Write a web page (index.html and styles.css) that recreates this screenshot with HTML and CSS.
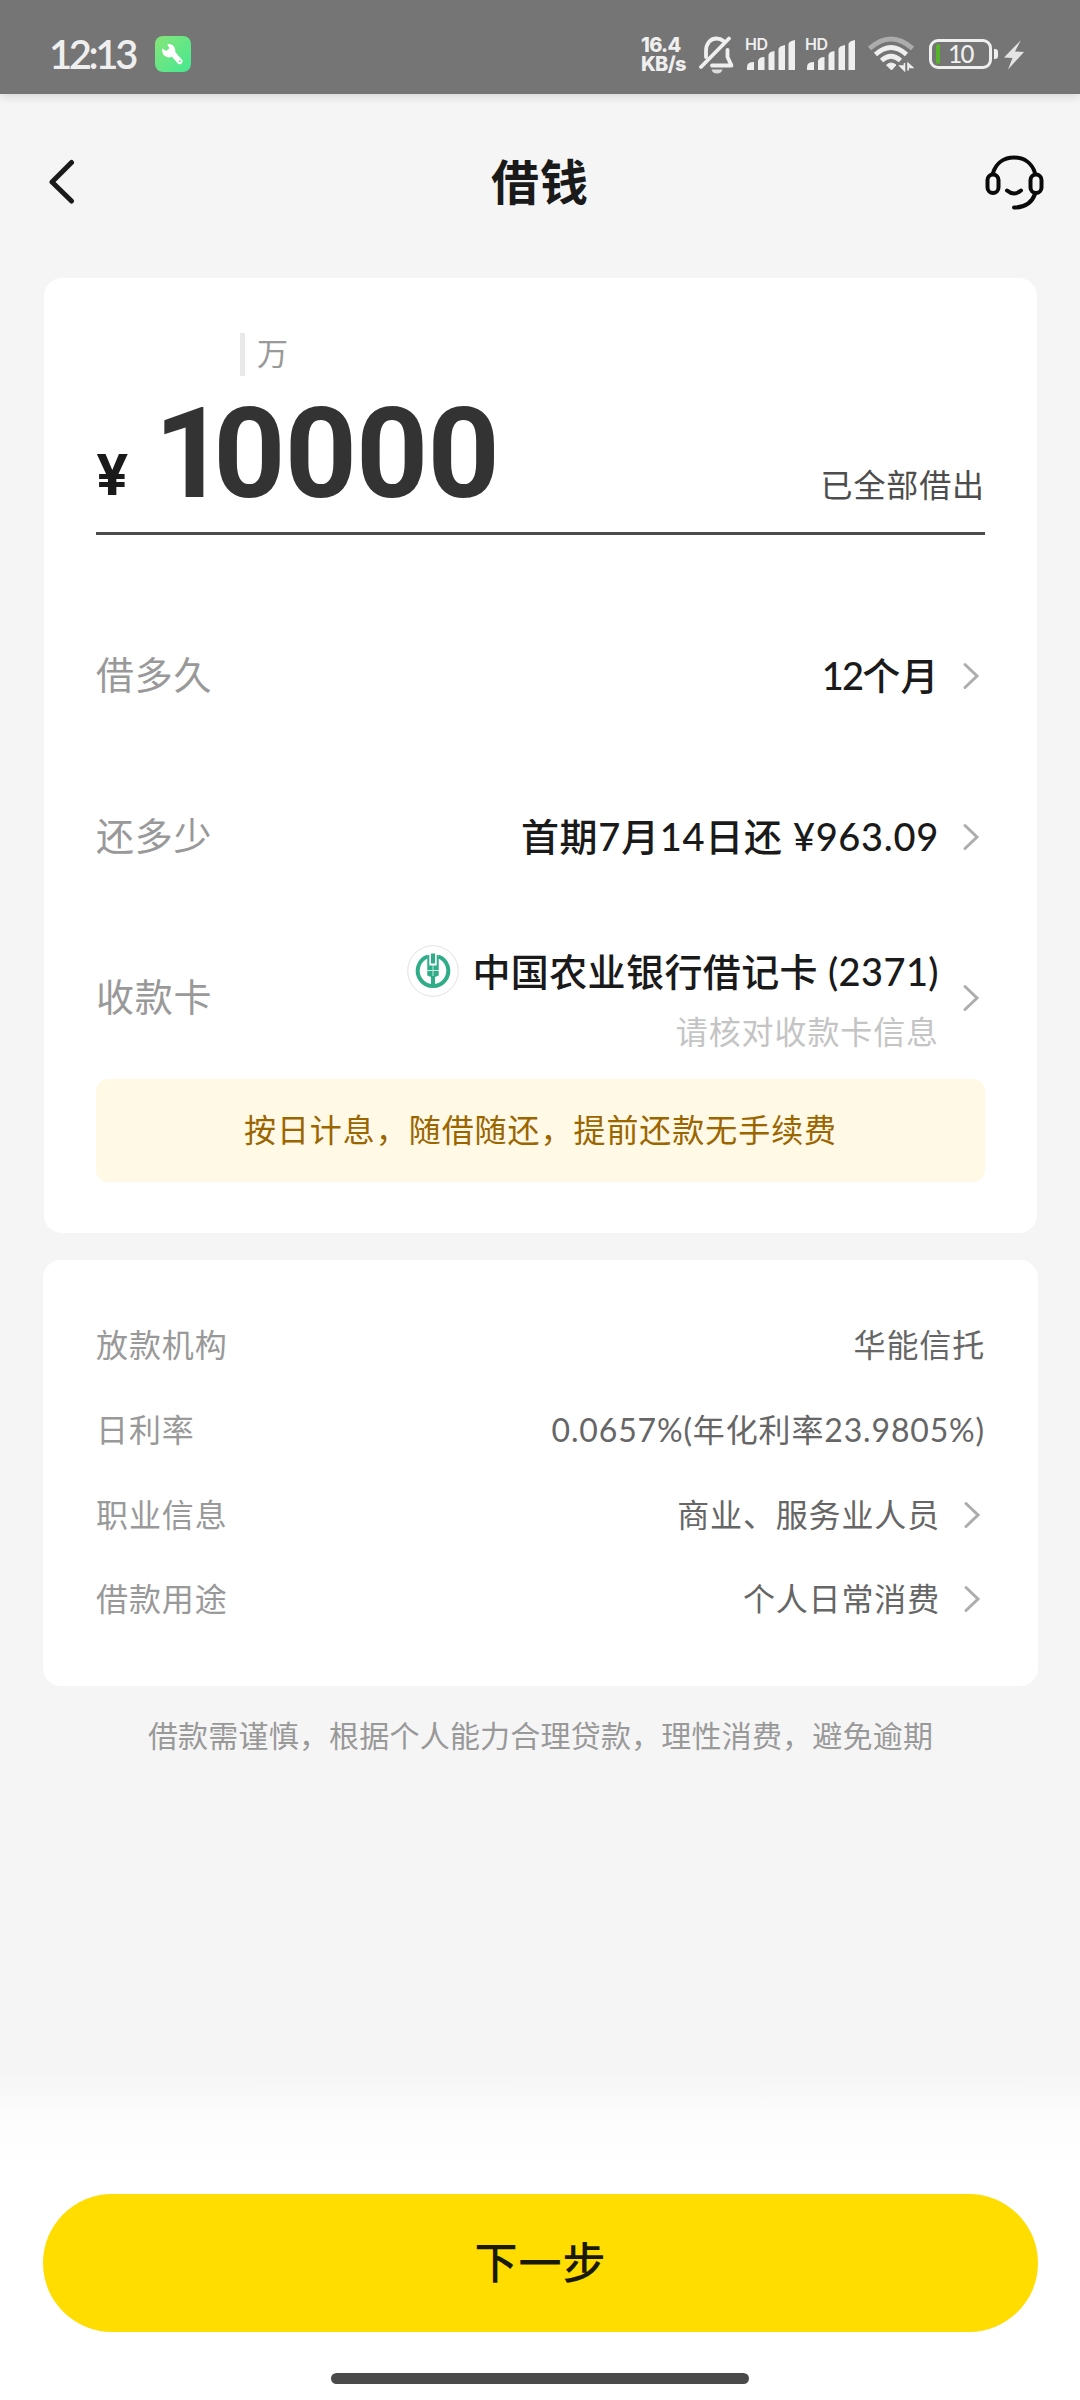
FILE: index.html
```html
<!DOCTYPE html>
<html lang="zh-CN">
<head>
<meta charset="utf-8">
<title>借钱</title>
<link rel="stylesheet" href="styles.css">
</head>
<body>
<div class="status">
  <span class="clock">12:13</span>
  <svg class="app-badge" width="36" height="36" viewBox="0 0 36 36">
    <defs><linearGradient id="g" x1="0" y1="0" x2="1" y2="1"><stop offset="0" stop-color="#86e57a"/><stop offset="1" stop-color="#45e890"/></linearGradient></defs>
    <rect width="36" height="36" rx="8" fill="url(#g)"/>
    <path d="M17 16.5L24.7 25.3" stroke="#fff" stroke-width="5.6" stroke-linecap="round"/>
    <path d="M12.2 8.2A6.7 6.7 0 1 1 7.4 12.6L11.2 15L14.4 12.3Z" fill="#fff"/>
    <circle cx="24.8" cy="25.3" r="1" fill="#66e686"/>
  </svg>
  <div class="status-right">
    <div class="speed"><span>16.4</span><span>KB/s</span></div>
    <svg class="bell" width="36" height="38" viewBox="0 0 36 38">
      <g fill="none" stroke="#efefef" stroke-width="3.8" stroke-linejoin="round" stroke-linecap="round">
        <path d="M7 21V15C7 8 11 2.500 17.500 2.500C20.500 2.500 22.500 3.300 24.500 5"/>
        <path d="M28.500 14V21L32.500 29.500H13"/>
        <path d="M2 31L30 2.500"/>
      </g>
      <path d="M12.500 33.500H23.500C22.500 36.500 20.500 37.500 18 37.500S13.500 36.500 12.500 33.500Z" fill="#ddd"/>
    </svg>
    <div class="signal"><span class="hd">HD</span>
      <svg width="50" height="30" viewBox="0 0 50 30" fill="#efefef"><path d="M0 30V27Q0 22 7 22V30ZM11 30V21Q12 17 17.500 17V30ZM21.500 30V15Q22 11.500 27.500 11V30ZM31.500 30V9Q32 6 38 5V30ZM41.500 30V4Q42 1 48 0V30Z"/></svg>
    </div>
    <div class="signal"><span class="hd">HD</span>
      <svg width="50" height="30" viewBox="0 0 50 30" fill="#efefef"><path d="M0 30V27Q0 22 7 22V30ZM11 30V21Q12 17 17.500 17V30ZM21.500 30V15Q22 11.500 27.500 11V30ZM31.500 30V9Q32 6 38 5V30ZM41.500 30V4Q42 1 48 0V30Z"/></svg>
    </div>
    <svg class="wifi" width="46" height="36" viewBox="0 0 46 36">
      <g fill="none" stroke-width="4.800">
        <path d="M1.500 12.500Q23 -6.500 44.500 12.500" stroke="#acacac"/>
        <path d="M7.500 18.500Q23 4.500 38.500 18.500" stroke="#efefef"/>
        <path d="M13.500 24.500Q23 16 32.500 24.500" stroke="#efefef"/>
      </g>
      <path d="M18.500 29Q23 25 28 29L23.500 34Z" fill="#efefef" stroke="#efefef" stroke-linejoin="round"/>
      <path d="M36.500 27V34.500L32 30H35M40 34.500V27.500L44.500 31.500H41.500" fill="#efefef" stroke="#efefef" stroke-width="1.500"/>
    </svg>
    <div class="battery"><span class="level"></span><span class="pct">10</span></div>
    <span class="tip"></span>
    <svg class="bolt" width="20" height="30" viewBox="0 0 20 30"><path d="M17 0L0 17.500L8.500 18L4 29.500L20 12L11 11.500Z" fill="#e4e4e4"/></svg>
  </div>
</div>

<header class="nav">
  <svg width="26" height="46" viewBox="0 0 26 46"><path d="M22.500 3.500L3 23L22.500 42" fill="none" stroke="#1a1a1a" stroke-width="5" stroke-linecap="round" stroke-linejoin="round"/></svg>
  <h1>借钱</h1>
  <svg width="60" height="56" viewBox="0 0 60 56"><g fill="none" stroke="#0a0a0a" stroke-width="4" stroke-linecap="round">
    <path d="M9 19C12 9 20 3.500 30 3.500S48 9 51 19"/>
    <rect x="3.500" y="20.500" width="11" height="18.500" rx="5.500"/><rect x="46.500" y="20.500" width="11" height="18.500" rx="5.500"/>
    <path d="M51 40C48 48.500 41 53.500 30 53.500M23 36.500Q30 42.500 37 36.500"/></g></svg>
</header>

<main>
  <section class="card loan">
    <div class="amount">
      <div class="unit"><i></i><span>万</span></div>
      <div class="sum"><span class="yen">¥</span><span class="num"><span class="lead">1</span>0000</span><span class="note">已全部借出</span></div>
    </div>
    <div class="row"><span class="label">借多久</span><span class="value"><span class="months">12</span>个月</span><svg class="chev" width="18" height="28" viewBox="0 0 18 28"><path d="M3 2.500L15 14L3 25.500"/></svg></div>
    <div class="row"><span class="label">还多少</span><span class="value wide">首期7月14日还 ¥963.09</span><svg class="chev" width="18" height="28" viewBox="0 0 18 28"><path d="M3 2.500L15 14L3 25.500"/></svg></div>
    <div class="row"><span class="label">收款卡</span>
      <div class="bank">
        <div class="bank-name">
          <svg width="52" height="52" viewBox="0 0 52 52"><circle cx="26" cy="26" r="25.300" fill="#fff" stroke="#e2e2e2"/>
            <path d="M20.500 11.500A15.300 15.300 0 1 0 31.500 11.500" fill="none" stroke="#2fac88" stroke-width="4"/>
            <path d="M24 8.500H28V18.500H24ZM20.300 10H22.300V20.500H29.700V10H31.700V30.500L28 32V41H24V32L20.300 30.500Z" fill="#2fac88"/>
            <path d="M20 25.500H32M26 20V31" stroke="#c9ebe0" stroke-width="1"/></svg>
          <span class="value">中国农业银行借记卡 (2371)</span>
        </div>
        <span class="hint">请核对收款卡信息</span>
      </div>
      <svg class="chev" width="18" height="28" viewBox="0 0 18 28"><path d="M3 2.500L15 14L3 25.500"/></svg></div>
    <p class="promo">按日计息，随借随还，提前还款无手续费</p>
  </section>

  <section class="card details">
    <div class="line"><span class="key">放款机构</span><span class="val">华能信托</span></div>
    <div class="line"><span class="key">日利率</span><span class="val">0.0657%(年化利率23.9805%)</span></div>
    <div class="line"><span class="key">职业信息</span><span class="val">商业、服务业人员</span><svg class="chev" width="18" height="28" viewBox="0 0 18 28"><path d="M3 2.500L15 14L3 25.500"/></svg></div>
    <div class="line"><span class="key">借款用途</span><span class="val">个人日常消费</span><svg class="chev" width="18" height="28" viewBox="0 0 18 28"><path d="M3 2.500L15 14L3 25.500"/></svg></div>
  </section>
  <p class="warn">借款需谨慎，根据个人能力合理贷款，理性消费，避免逾期</p>
</main>

<footer>
  <button class="next">下一步</button>
  <div class="home"></div>
</footer>
</body>
</html>
```
FILE: styles.css
```css
* { box-sizing: border-box; }
body {
  margin: 0;
  width: 1080px;
  height: 2400px;
  display: flex;
  flex-direction: column;
  background: #f5f5f5;
  color: #1a1a1a;
  font-family: Lato, "Noto Sans CJK SC", sans-serif;
  overflow: hidden;
}
p, h1 { margin: 0; }
svg { display: block; flex: none; }

/* Status bar */
.status {
  flex: none;
  height: 94px;
  padding: 36px 56px 0 49px;
  display: flex;
  align-items: flex-start;
  background: #757575;
  color: #efefef;
  box-shadow: 0 2px 10px rgba(0, 0, 0, .14);
}
.clock { width: 106px; font-size: 40px; line-height: 36px; font-weight: 600; letter-spacing: -3.4px; }
.status-right { margin-left: auto; display: flex; align-items: flex-start; }
.speed { width: 58px; display: flex; flex-direction: column; font-family: Inter, sans-serif; font-size: 20px; font-weight: 800; line-height: 18.5px; letter-spacing: -.7px; }
.bell { margin-right: 10px; }
.signal { position: relative; width: 60px; padding: 4px 0 0 2px; }
.hd { position: absolute; left: 0; top: 0; font-family: Inter, sans-serif; font-size: 16px; line-height: 17px; font-weight: 600; letter-spacing: -.4px; }
.wifi { margin-left: 3px; }
.battery { position: relative; width: 63px; height: 30px; margin: 3px 2px 0 15px; border: 3px solid #efefef; border-radius: 9px; text-align: center; font-size: 24px; line-height: 24px; font-weight: 500; letter-spacing: -1.6px; }
.level { position: absolute; left: 4px; top: 2px; width: 4px; height: 20px; border-radius: 2px; background: #55b42a; }
.tip { width: 4px; height: 10px; margin-top: 13px; border-radius: 0 3px 3px 0; background: #efefef; }
.bolt { margin: 4px 0 0 6px; }

/* Title bar */
.nav {
  flex: none;
  height: 184px;
  padding: 0 36px 8px 49px;
  display: grid;
  grid-template-columns: 47px 1fr 60px;
  align-items: center;
}
.nav h1 { text-align: center; font-size: 48px; font-weight: 700; line-height: 60px; letter-spacing: 1px; }

main { flex: 1; padding: 0 42px 0 43px; }
.card { background: #fff; border-radius: 18px; }

/* Loan card */
.loan { height: 955px; margin: 0 1px; padding: 0 52px; }
.amount { height: 257px; padding-top: 55px; border-bottom: 3px solid #4c4c4c; }
.unit { display: flex; gap: 12px; margin-left: 144px; align-items: center; height: 43px; color: #999; font-size: 31px; line-height: 40px; }
.unit span { padding-bottom: 3px; }
.unit i { width: 5px; height: 43px; background: #e8e8e8; }
.sum { height: 156px; display: flex; align-items: baseline; line-height: 156px; }
.yen { width: 58px; font-family: Inter, sans-serif; font-size: 57px; font-weight: 700; letter-spacing: -2px; transform: translateY(-2px); }
.num { font-family: Roboto, sans-serif; font-size: 126px; font-weight: 700; letter-spacing: -.9px; color: #333; }
.lead { letter-spacing: -13px; }
.note { margin-left: auto; font-size: 32px; line-height: 40px; letter-spacing: .9px; color: #4d4d4d; }
.row { height: 161px; padding-right: 5px; display: flex; align-items: center; }
.row:nth-child(2) { margin-top: 60px; }
.label { margin-right: auto; padding-bottom: 3px; font-size: 38px; line-height: 48px; letter-spacing: .8px; color: #999; }
.row > .value { padding-bottom: 2px; }
.value { font-size: 38px; line-height: 48px; font-weight: 500; letter-spacing: .4px; }
.wide { letter-spacing: .7px; }
.months { letter-spacing: -1.8px; }
.chev { margin-left: 23px; fill: none; stroke: #adadad; stroke-width: 3; stroke-linecap: round; }
.row .chev { margin-top: 1px; }
.bank { display: flex; flex-direction: column; align-items: flex-end; gap: 12px; padding-top: 4px; }
.bank-name { display: flex; align-items: center; gap: 13px; }
.hint { font-size: 32px; line-height: 46px; letter-spacing: .9px; color: #c4c4c4; }
.promo { height: 103px; margin-top: 1px; border-radius: 12px; background: #fff9e6; color: #9b6500; text-align: center; font-size: 32px; line-height: 101px; letter-spacing: .95px; }

/* Loan terms */
.details { height: 426px; margin-top: 27px; padding: 43px 53px 0; }
.line { height: 84.7px; padding-right: 4px; display: flex; align-items: center; font-size: 32px; line-height: 40px; letter-spacing: .9px; color: #999; }
.key { margin-right: auto; }
.val { letter-spacing: .85px; color: #666; }
.line:nth-child(-n+2) { padding-right: 0; }

.warn { margin-top: 29px; text-align: center; font-size: 30px; line-height: 40px; letter-spacing: .2px; color: #999; }

/* Bottom action */
footer {
  flex: none;
  height: 330px;
  padding: 124px 42px 0 43px;
  background: linear-gradient(#f5f5f5, #fcfcfc 45px, #fff 100px);
}
.next { display: block; width: 995px; height: 138px; padding: 0; border: 0; border-radius: 69px; background: #fd0; color: #1a1a00; font: 500 43px/136px Lato, "Noto Sans CJK SC", sans-serif; letter-spacing: 1px; }
.home { width: 418px; height: 11px; margin: 41px 0 0 288px; border-radius: 6px; background: #4a4a4a; }
```
